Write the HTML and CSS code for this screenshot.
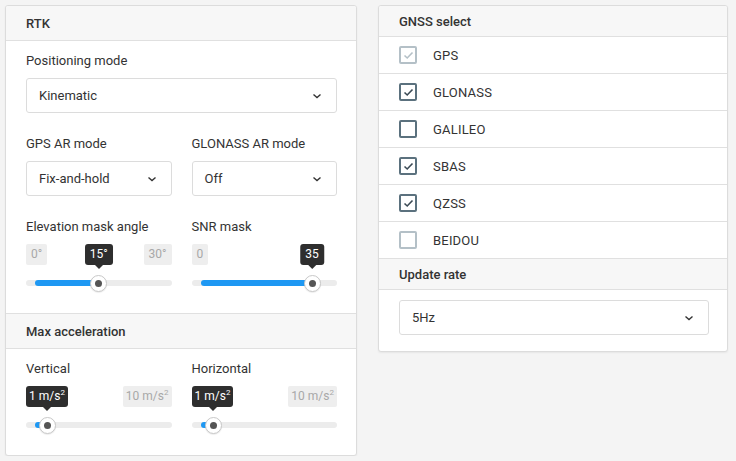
FILE: index.html
```html
<!DOCTYPE html>
<html>
<head>
<meta charset="utf-8">
<link rel="stylesheet" href="styles.css">
</head>
<body>
<div class="page">
  <section class="card card-left">
    <div class="card-header">RTK</div>
    <div class="card-body">
      <div class="field">
        <div class="field-label">Positioning mode</div>
        <div class="select"><span>Kinematic</span><svg class="chev" width="10" height="6" viewBox="0 0 10 6"><path d="M1.5 1.5 L5 4.5 L8.5 1.5" fill="none" stroke="#333" stroke-width="1.4"/></svg></div>
      </div>
      <div class="row2">
        <div class="field">
          <div class="field-label">GPS AR mode</div>
          <div class="select"><span>Fix-and-hold</span><svg class="chev" width="10" height="6" viewBox="0 0 10 6"><path d="M1.5 1.5 L5 4.5 L8.5 1.5" fill="none" stroke="#333" stroke-width="1.4"/></svg></div>
        </div>
        <div class="field">
          <div class="field-label">GLONASS AR mode</div>
          <div class="select"><span>Off</span><svg class="chev" width="10" height="6" viewBox="0 0 10 6"><path d="M1.5 1.5 L5 4.5 L8.5 1.5" fill="none" stroke="#333" stroke-width="1.4"/></svg></div>
        </div>
      </div>
      <div class="row2">
        <div class="field">
          <div class="field-label">Elevation mask angle</div>
          <div class="slider">
            <div class="slider-labels"><span class="val">0°</span><span class="val">30°</span></div>
            <div class="track">
              <div class="fill" style="width: calc((100% - 18px) * 0.5)"></div>
              <div class="thumb" style="left: calc(9px + (100% - 18px) * 0.5)"></div>
            </div>
            <div class="tip" style="left: calc(9px + (100% - 18px) * 0.5)">15°</div>
          </div>
        </div>
        <div class="field">
          <div class="field-label">SNR mask</div>
          <div class="slider">
            <div class="slider-labels"><span class="val">0</span></div>
            <div class="track">
              <div class="fill" style="width: calc((100% - 18px) * 0.875)"></div>
              <div class="thumb" style="left: calc(9px + (100% - 18px) * 0.875)"></div>
            </div>
            <div class="tip" style="left: calc(9px + (100% - 18px) * 0.875)">35</div>
          </div>
        </div>
      </div>
    </div>
    <div class="card-header header-sep">Max acceleration</div>
    <div class="card-body">
      <div class="row2">
        <div class="field">
          <div class="field-label">Vertical</div>
          <div class="slider">
            <div class="slider-labels end"><span class="val val-unit">10 m/s<sup>2</sup></span></div>
            <div class="track">
              <div class="fill" style="width: calc((100% - 18px) * 0.1)"></div>
              <div class="thumb" style="left: calc(9px + (100% - 18px) * 0.1)"></div>
            </div>
            <div class="tip tip-left">1 m/s<sup>2</sup></div>
          </div>
        </div>
        <div class="field">
          <div class="field-label">Horizontal</div>
          <div class="slider">
            <div class="slider-labels end"><span class="val val-unit">10 m/s<sup>2</sup></span></div>
            <div class="track">
              <div class="fill" style="width: calc((100% - 18px) * 0.1)"></div>
              <div class="thumb" style="left: calc(9px + (100% - 18px) * 0.1)"></div>
            </div>
            <div class="tip tip-left">1 m/s<sup>2</sup></div>
          </div>
        </div>
      </div>
    </div>
  </section>

  <section class="card card-right">
    <div class="card-header header-small">GNSS select</div>
    <ul class="check-list">
      <li class="check-row"><span class="cb cb-light"><svg width="11" height="9" viewBox="0 0 11 9"><path d="M1.5 4.5 L4.2 7 L9.5 1.5" fill="none" stroke="#b4c0c7" stroke-width="1.6"/></svg></span><span class="check-label">GPS</span></li>
      <li class="check-row"><span class="cb"><svg width="11" height="9" viewBox="0 0 11 9"><path d="M1.5 4.5 L4.2 7 L9.5 1.5" fill="none" stroke="#3b4a55" stroke-width="1.6"/></svg></span><span class="check-label">GLONASS</span></li>
      <li class="check-row"><span class="cb"></span><span class="check-label">GALILEO</span></li>
      <li class="check-row"><span class="cb"><svg width="11" height="9" viewBox="0 0 11 9"><path d="M1.5 4.5 L4.2 7 L9.5 1.5" fill="none" stroke="#3b4a55" stroke-width="1.6"/></svg></span><span class="check-label">SBAS</span></li>
      <li class="check-row"><span class="cb"><svg width="11" height="9" viewBox="0 0 11 9"><path d="M1.5 4.5 L4.2 7 L9.5 1.5" fill="none" stroke="#3b4a55" stroke-width="1.6"/></svg></span><span class="check-label">QZSS</span></li>
      <li class="check-row"><span class="cb cb-light"></span><span class="check-label">BEIDOU</span></li>
    </ul>
    <div class="card-header header-small header-sep">Update rate</div>
    <div class="right-body">
      <div class="select"><span>5Hz</span><svg class="chev" width="10" height="6" viewBox="0 0 10 6"><path d="M1.5 1.5 L5 4.5 L8.5 1.5" fill="none" stroke="#333" stroke-width="1.4"/></svg></div>
    </div>
  </section>
</div>
</body>
</html>
```

FILE: styles.css
```css
* { box-sizing: border-box; }
html, body { margin: 0; padding: 0; }
body {
  background: #f4f4f4;
  font-family: Roboto, "Liberation Sans", Arial, sans-serif;
  font-size: 13px;
  color: #333;
}
.page {
  display: flex;
  align-items: flex-start;
  gap: 21px;
  padding: 5px 0 0 5px;
}
.card {
  background: #fff;
  border: 1px solid #dcdcdc;
  border-radius: 3px;
  box-shadow: 0 1px 2px rgba(0,0,0,0.06);
  overflow: hidden;
}
.card-left { width: 352px; }
.card-right { width: 350px; }
.card-header {
  background: #f7f7f7;
  height: 35px;
  border-bottom: 1px solid #e0e0e0;
  padding: 0 20px;
  display: flex;
  align-items: center;
  font-weight: 500;
  font-size: 13px;
  color: #333;
}
.header-small { height: 31px; }
.header-sep { border-top: 1px solid #e0e0e0; height: 36px; }
.header-small.header-sep { height: 32px; }
.card-body {
  padding: 12px 19px 27px 20px;
  display: flex;
  flex-direction: column;
  gap: 23px;
}
.row2 {
  display: grid;
  grid-template-columns: 1fr 1fr;
  column-gap: 20px;
}
.field-label {
  line-height: 16px;
  margin-bottom: 9px;
}
.select {
  height: 35px;
  border: 1px solid #dcdcdc;
  border-radius: 3px;
  display: flex;
  align-items: center;
  justify-content: space-between;
  padding: 0 14px 0 12px;
  color: #333;
}
.chev { display: block; }
.slider { position: relative; }
.slider-labels {
  display: flex;
  justify-content: space-between;
  height: 21px;
}
.slider-labels.end { justify-content: flex-end; }
.val {
  background: #eeeeee;
  color: #a8a8a8;
  font-size: 12px;
  line-height: 21px;
  height: 21px;
  padding: 0 5px;
  border-radius: 2px;
}
.val-unit { padding: 0 3px; }
sup { font-size: 8px; vertical-align: 0; position: relative; top: -5px; }
.track {
  position: relative;
  margin-top: 15px;
  height: 6px;
  background: #ececec;
  border-radius: 3px;
}
.fill {
  position: absolute;
  left: 9px;
  top: 0;
  height: 6px;
  background: #1e98f3;
  border-radius: 3px;
}
.thumb {
  position: absolute;
  top: 3px;
  width: 17px;
  height: 17px;
  margin: -8.5px 0 0 -8.5px;
  background: #fff;
  border: 1px solid #c8c8c8;
  border-radius: 50%;
  box-shadow: 0 1px 1px rgba(0,0,0,0.08);
}
.thumb::after {
  content: "";
  position: absolute;
  left: 50%;
  top: 50%;
  width: 7px;
  height: 7px;
  margin: -3.5px 0 0 -3.5px;
  background: #555;
  border-radius: 50%;
}
.tip {
  position: absolute;
  top: 0;
  transform: translateX(-50%);
  background: #2e2e2e;
  color: #fff;
  font-size: 12px;
  line-height: 21px;
  height: 21px;
  padding: 0 5px;
  border-radius: 3px;
  white-space: nowrap;
}
.tip::after {
  content: "";
  position: absolute;
  left: 50%;
  bottom: -4px;
  margin-left: -4px;
  border-left: 4px solid transparent;
  border-right: 4px solid transparent;
  border-top: 4px solid #2e2e2e;
}
.tip-left {
  left: 0;
  transform: none;
  padding: 0 3px;
}
.tip-left::after { left: 21px; }
.check-list {
  list-style: none;
  margin: 0;
  padding: 0;
}
.check-row {
  height: 37px;
  display: flex;
  align-items: center;
  padding: 0 20px;
  gap: 16px;
  border-bottom: 1px solid #e0e0e0;
}
.check-row:last-child { border-bottom: none; height: 36px; }
.cb {
  width: 18px;
  height: 18px;
  border: 2px solid #5b717e;
  border-radius: 2px;
  display: flex;
  align-items: center;
  justify-content: center;
  flex: none;
}
.cb svg { display: block; }
.cb-light { border-color: #b4c0c7; }
.check-label { color: #333; letter-spacing: 0.2px; }
.right-body { padding: 10px 18px 16px 20px; }
```
